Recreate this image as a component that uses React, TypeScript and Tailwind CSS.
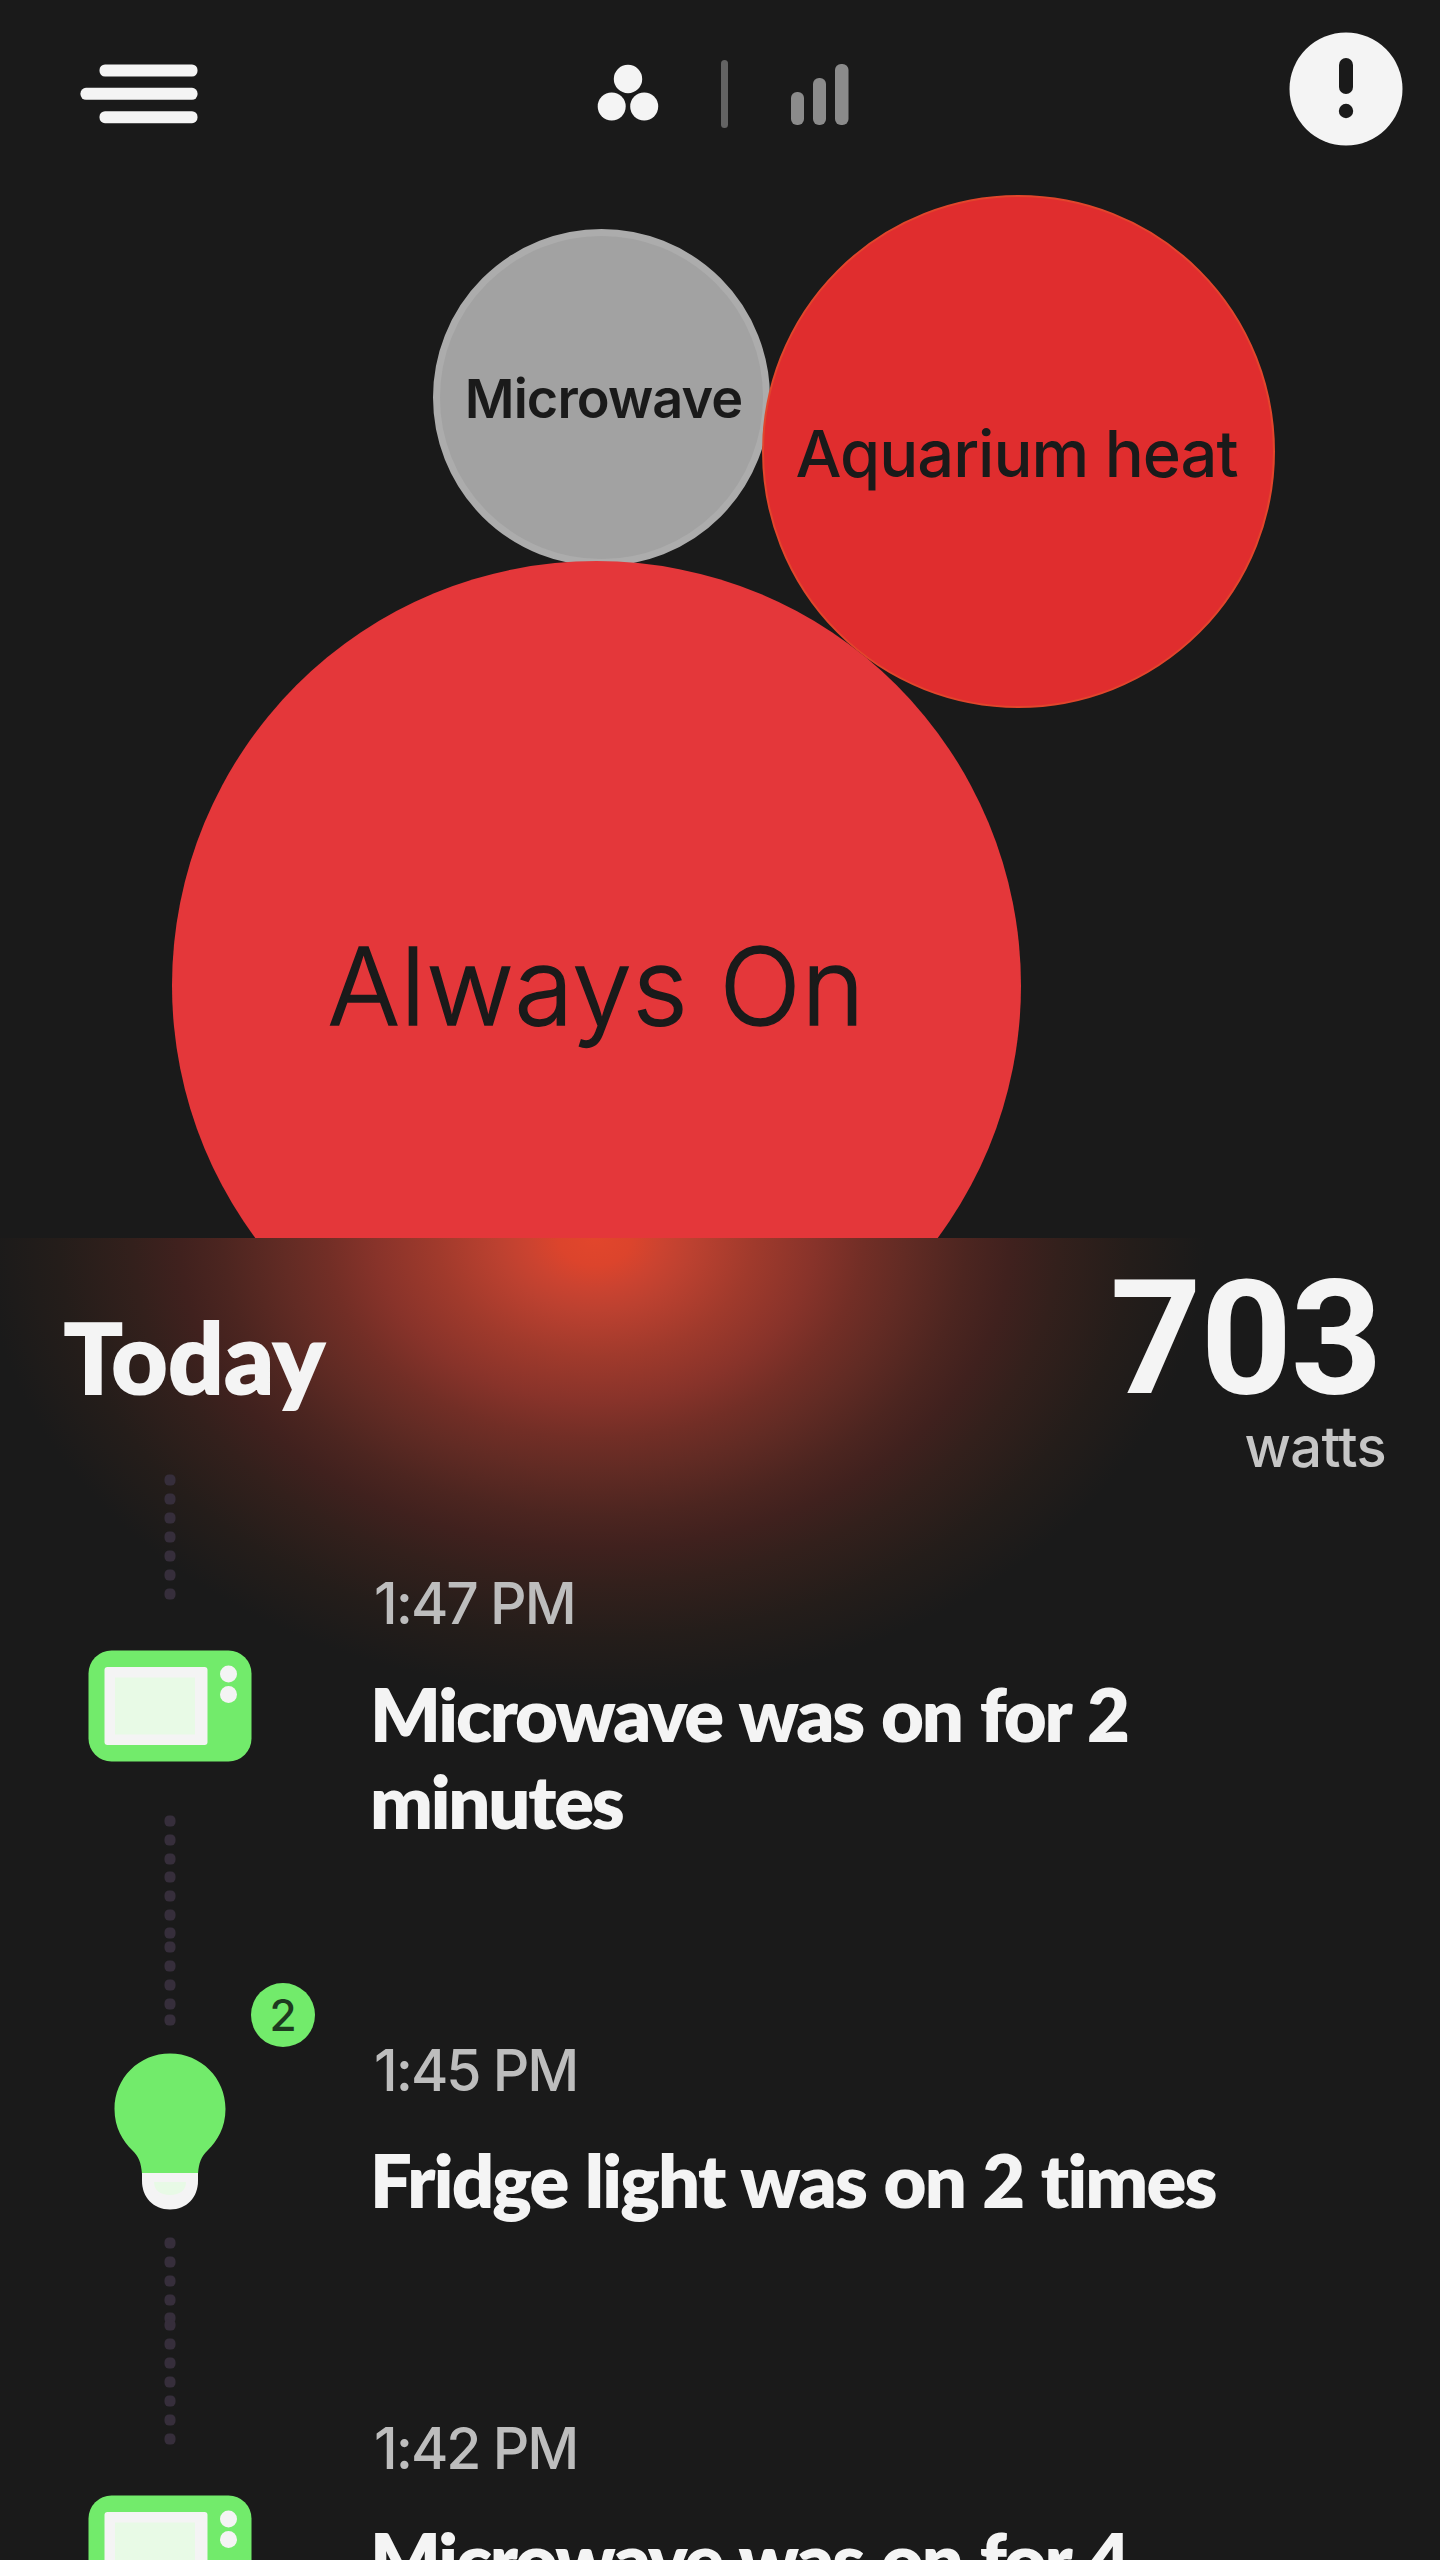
import React from "react";

type Entry = { time: string; title: string };

const entries: Entry[] = [
  { time: "1:47 PM", title: "Microwave was on for 2 minutes" },
  { time: "1:45 PM", title: "Fridge light was on 2 times" },
  { time: "1:42 PM", title: "Microwave was on for 4" },
];

function MenuIcon() {
  return (
    <svg className="h-[60px] w-[118px]" viewBox="0 0 118 60" fill="#f4f4f4">
      <rect x="19.500" y="0.500" width="98" height="12" rx="5.500" />
      <rect x="0.500" y="23.800" width="117" height="12" rx="5.500" />
      <rect x="19.500" y="47.200" width="98" height="12" rx="5.500" />
    </svg>
  );
}

function BubblesIcon() {
  return (
    <svg className="h-[58px] w-[62px]" viewBox="0 0 62 58" fill="#f4f4f4">
      <circle cx="31" cy="15" r="14.200" />
      <circle cx="14.700" cy="42.500" r="14" />
      <circle cx="47.200" cy="42.500" r="14" />
    </svg>
  );
}

function BarsIcon() {
  return (
    <svg className="h-[64px] w-[62px]" viewBox="0 0 62 64" fill="#8b8b8b">
      <rect x="2" y="30" width="13" height="33" rx="6" />
      <rect x="24" y="16" width="13" height="47" rx="6" />
      <rect x="46" y="2" width="13.500" height="61" rx="6" />
    </svg>
  );
}

function AlertIcon() {
  return (
    <svg className="h-[114px] w-[114px]" viewBox="0 0 114 114">
      <circle cx="57" cy="57" r="56.500" fill="#f4f4f4" />
      <rect x="50" y="26" width="14" height="36" rx="7" fill="#1a1a1a" />
      <circle cx="57" cy="79" r="7.200" fill="#1a1a1a" />
    </svg>
  );
}

function MicrowaveIcon() {
  return (
    <svg className="block h-[112px] w-[164px] shrink-0" viewBox="0 0 164 112">
      <rect x="0.500" y="0.500" width="163" height="111" rx="23" fill="#72eb6b" />
      <rect x="16.500" y="17" width="103" height="78" rx="3" fill="#f4f4f4" />
      <rect x="27" y="27.500" width="80" height="57" fill="#e8fae6" />
      <circle cx="140.500" cy="24" r="8.500" fill="#f4f4f4" />
      <circle cx="140.500" cy="44.500" r="8.500" fill="#f4f4f4" />
    </svg>
  );
}

function BulbIcon() {
  return (
    <svg className="block h-[157px] w-[112px] shrink-0" viewBox="0 0 112 157">
      <path
        d="M56 0.500C25 0.500 0.500 25 0.500 56C0.500 75 9 88 18 97C25 104 27 109 28 121H84C85 109 87 104 94 97C103 88 111.500 75 111.500 56C111.500 25 87 0.500 56 0.500Z"
        fill="#72eb6b"
      />
      <path d="M28 120H84V128C84 144 73 156.500 56 156.500C39 156.500 28 144 28 128Z" fill="#f4f4f4" />
      <path d="M40 129H72C72 137 66 142 56 142C46 142 40 137 40 129Z" fill="#e8fae6" />
    </svg>
  );
}

function Dots({ centers, className }: { centers: number[]; className: string }) {
  return (
    <svg className={`block w-3 shrink-0 ${className}`} fill="#362e3b">
      {centers.map((y) => (
        <rect key={y} x="0.500" y={y - 5.5} width="11" height="11" rx="4.500" />
      ))}
    </svg>
  );
}

export default function App() {
  return (
    <main className="flex h-[2560px] w-[1440px] flex-col overflow-hidden bg-[#1a1a1a] font-['Lato',sans-serif] text-[#f4f4f4]">
      <header className="flex h-[180px] shrink-0 items-start pr-[37px] pl-[80px]">
        <div className="w-[118px] pt-16">
          <MenuIcon />
        </div>
        <div className="ml-[399px] flex items-start">
          <div className="pt-16">
            <BubblesIcon />
          </div>
          <div className="mt-[60px] ml-[62px] h-[68px] w-[7px] rounded-full bg-[#636363]" />
          <div className="ml-[61px] pt-[62px]">
            <BarsIcon />
          </div>
        </div>
        <div className="ml-auto pt-8">
          <AlertIcon />
        </div>
      </header>

      <section className="relative h-[1058px] shrink-0 overflow-hidden font-['Inter',sans-serif] text-[#1a1a1a]">
        <div className="absolute top-[49px] left-[433px] flex size-[337px] items-center justify-center rounded-full border-[7px] border-[#acacac] bg-[#a2a2a2]">
          <span className="relative top-px left-[2px] text-[54px] leading-none font-semibold tracking-[-0.9px]">
            Microwave
          </span>
        </div>
        <div className="absolute top-[15px] left-[762px] flex size-[513px] items-center justify-center rounded-full border-2 border-[#e2452c] bg-[#e02d2e]">
          <span className="relative top-[2px] -left-[2px] text-[65px] leading-none font-medium tracking-[-1px] whitespace-nowrap">
            Aquarium heat
          </span>
        </div>
        <div className="absolute top-[381px] left-[172px] flex size-[849px] items-center justify-center rounded-full bg-[#e4373a]">
          <span className="relative top-px text-[107px] leading-none font-light tracking-[0.8px] whitespace-nowrap [-webkit-text-stroke:1.5px_#1a1a1a]">
            Always On
          </span>
        </div>
      </section>

      <section className="flex grow flex-col bg-[radial-gradient(610px_455px_at_595px_0px,#e2462c_0%,#dc442c_6%,#cb4330_11%,#bc4130_16%,#a03a2c_26%,#88332a_36%,#722e26_44%,#622b24_51%,#4c2520_61%,#40211e_68%,#33201c_76%,#241d1a_88%,#1a1a1a_100%)]">
        <div className="flex h-[230px] shrink-0 items-start justify-between pr-[54px] pl-[64px]">
          <h1 className="pt-[70px] text-[97px] leading-none font-black tracking-[0.6px] [-webkit-text-stroke:2px_#f4f4f4]">
            Today
          </h1>
          <div className="flex flex-col items-end pt-[23px]">
            <span className="pr-[5px] font-['Roboto',sans-serif] text-[160px] leading-[156px] font-bold tracking-[-1.5px]">
              703
            </span>
            <span className="mt-[2px] font-['Inter',sans-serif] text-[56px] leading-none font-medium tracking-[-0.6px] text-[#c6c6c6]">
              watts
            </span>
          </div>
        </div>

        <div className="flex pl-[88px]">
          <div className="flex w-[164px] shrink-0 flex-col items-center">
            <Dots className="mt-[4px] h-[128px]" centers={[8, 27, 46, 65, 84, 103, 122]} />
            <div className="h-[50px]" />
            <MicrowaveIcon />
            <Dots
              className="mt-[52px] h-[212px]"
              centers={[7, 26, 45, 63, 82, 101, 119, 133, 152, 171, 190, 206]}
            />
            <div className="relative mt-[27px]">
              <BulbIcon />
              <span className="absolute -top-[70px] left-[137px] flex size-16 items-center justify-center rounded-full bg-[#72eb6b] font-['Inter',sans-serif] text-[44px] leading-none font-medium text-[#1e3a20]">
                2
              </span>
            </div>
            <Dots
              className="mt-[27px] h-[210px]"
              centers={[6, 25, 44, 63, 81, 88, 107, 126, 145, 164, 183, 202]}
            />
            <div className="mt-[48px]">
              <MicrowaveIcon />
            </div>
          </div>

          <ul className="ml-[118px] flex w-[900px] flex-col pt-[107px]">
            {entries.map((e, i) => (
              <li key={e.time} className={i === 0 ? "h-[467px]" : i === 1 ? "h-[378px]" : "h-[260px]"}>
                <p className="pl-[4px] font-['Inter',sans-serif] text-[57px] leading-none font-medium tracking-[-2px] text-[#bdbdbd]">
                  {e.time}
                </p>
                <p
                  className={
                    i === 1
                      ? "mt-[37px] text-[74px] leading-[87px] font-extrabold tracking-[-1.8px] [word-spacing:2px]"
                      : "mt-[38px] w-[800px] text-[74px] leading-[87px] font-extrabold tracking-[-2.2px] [word-spacing:3px]"
                  }
                >
                  {e.title}
                </p>
              </li>
            ))}
          </ul>
        </div>
      </section>
    </main>
  );
}
